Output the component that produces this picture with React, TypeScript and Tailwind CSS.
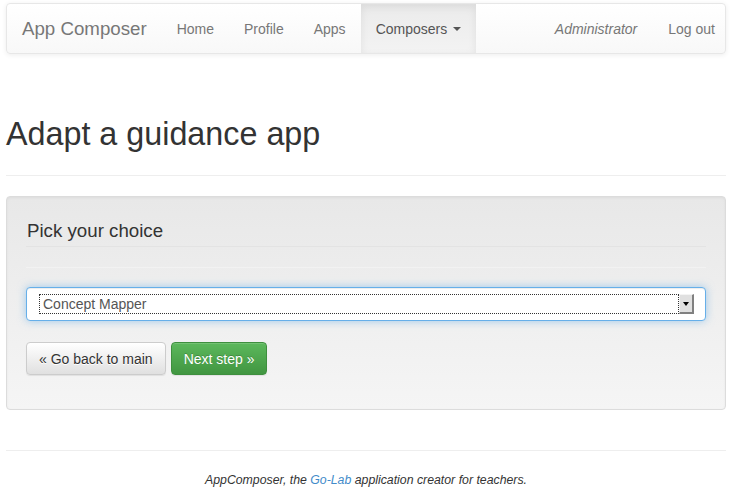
import React from "react";

function NavLink({ children, active = false }: { children: React.ReactNode; active?: boolean }) {
  return (
    <a
      className={
        active
          ? "flex items-center px-[15px] text-[#555] bg-linear-to-b from-[#ebebeb] to-[#f3f3f3] shadow-[inset_0_3px_9px_rgba(0,0,0,0.075)]"
          : "flex items-center px-[15px] text-[#777]"
      }
    >
      {children}
    </a>
  );
}

export default function App() {
  return (
    <div className="min-h-screen bg-white pl-[6px] pr-[13px] pt-[3px] font-['Liberation_Sans',Arial,sans-serif] text-[14px] leading-[20px] text-[#333]">
      {/* Navbar */}
      <nav className="flex h-[51px] items-stretch rounded-[4px] border border-[#e7e7e7] bg-linear-to-b from-white to-[#f8f8f8] shadow-[inset_0_1px_0_rgba(255,255,255,0.15),0_1px_5px_rgba(0,0,0,0.075)]">
        <a className="flex items-center px-[15px] text-[18.7px] text-[#777]">App Composer</a>
        <div className="flex items-stretch">
          <NavLink>Home</NavLink>
          <NavLink>Profile</NavLink>
          <NavLink>Apps</NavLink>
          <NavLink active>
            Composers
            <span className="ml-[6px] inline-block h-0 w-0 border-x-[4px] border-t-[4px] border-x-transparent border-t-[#555]" />
          </NavLink>
        </div>
        <div className="ml-auto flex items-stretch">
          <span className="flex items-center pr-[31px] italic text-[#777]">Administrator</span>
          <a className="flex items-center pr-[10px] text-[#777]">Log out</a>
        </div>
      </nav>

      {/* Page header */}
      <div className="mt-[60px] border-b border-[#eee] pb-[21px]">
        <h1 className="text-[32.3px] leading-[40px] font-normal text-[#333]">Adapt a guidance app</h1>
      </div>

      {/* Well */}
      <div className="mt-[20px] rounded-[4px] border border-[#dcdcdc] bg-linear-to-b from-[#e8e8e8] to-[#f5f5f5] px-[19px] pt-[19px] pb-[19px] shadow-[inset_0_1px_3px_rgba(0,0,0,0.05),0_1px_0_rgba(255,255,255,0.1)]">
        <div className="border-b border-[#e3e3e3] pl-[1px] text-[18.7px] leading-[30px] text-[#333]">Pick your choice</div>
        <div className="mt-[20px] border-t border-[#f2f2f2]" />
        <div className="mt-[19px] flex h-[34px] items-center rounded-[4px] border border-[#66afe9] bg-white pl-[12px] pr-[11px] shadow-[inset_0_1px_1px_rgba(0,0,0,0.075),0_0_8px_rgba(102,175,233,0.6)]">
          <div className="flex h-[20px] flex-1 items-center border border-dotted border-[#333] pl-[3px] text-[#555]">
            Concept Mapper
          </div>
          <div className="flex h-[20px] w-[15px] items-center justify-center border-r-2 border-b-2 border-l border-t border-r-[#808080] border-b-[#808080] border-l-[#f4f4f4] border-t-[#f4f4f4] bg-[#e0e0e0]">
            <span className="inline-block h-0 w-0 border-x-[3.5px] border-t-[4px] border-x-transparent border-t-black" />
          </div>
        </div>
        <div className="mt-[21px] mb-[15px] flex gap-[5px]">
          <button className="h-[33px] rounded-[4px] border border-[#ccc] bg-linear-to-b from-white to-[#e0e0e0] px-[12px] text-[14px] text-[#333] [text-shadow:0_1px_0_#fff] shadow-[inset_0_1px_0_rgba(255,255,255,0.15),0_1px_1px_rgba(0,0,0,0.075)]">
            « Go back to main
          </button>
          <button className="h-[33px] rounded-[4px] border border-[#3e8f3e] bg-linear-to-b from-[#5cb85c] to-[#419641] px-[12px] text-[14px] text-white [text-shadow:0_-1px_0_rgba(0,0,0,0.2)] shadow-[inset_0_1px_0_rgba(255,255,255,0.15),0_1px_1px_rgba(0,0,0,0.075)]">
            Next step »
          </button>
        </div>
      </div>

      {/* Footer */}
      <div className="mt-[40px] border-t border-[#eee]" />
      <p className="mt-[19px] text-center text-[12.3px] leading-[20px] italic text-[#333]">
        AppComposer, the <a className="text-[#428bca]">Go-Lab</a> application creator for teachers.
      </p>
    </div>
  );
}
